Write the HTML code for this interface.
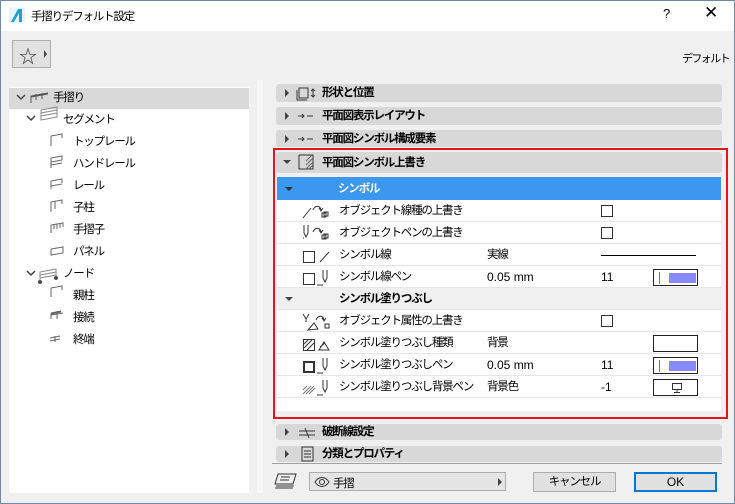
<!DOCTYPE html>
<html><head><meta charset="utf-8">
<style>
*{margin:0;padding:0;box-sizing:border-box}
body{width:735px;height:504px;overflow:hidden;font-family:"Liberation Sans","Noto Sans CJK JP",sans-serif;font-size:11.5px;letter-spacing:-1.2px;color:#000;background:#f0f0f0;position:relative;white-space:nowrap}
.a{position:absolute}
.l{letter-spacing:0;font-size:12px}
.win{left:0;top:0;width:735px;height:504px;border:1px solid #6f8aa5;background:#f0f0f0}
.title{left:1px;top:1px;width:733px;height:30px;background:#fff}
.bar{position:absolute;left:276px;width:446px;background:#d8d8d8;border-radius:3px;font-weight:bold;line-height:19px}
.bar .t{position:absolute;left:46px;top:0}
.tri{position:absolute;width:0;height:0;border-top:4px solid transparent;border-bottom:4px solid transparent;border-left:4px solid #444}
.trid{position:absolute;width:0;height:0;border-left:4px solid transparent;border-right:4px solid transparent;border-top:4px solid #444}
.tree div.r{position:absolute;height:22px;line-height:23px}
.row{position:absolute;left:277px;width:444px;height:22px;line-height:23px;border-bottom:1px solid #e6e6e6;background:#fff}
.row .n{position:absolute;left:62px}
.row .v{position:absolute;left:210px}
.row .k{position:absolute;left:324px;letter-spacing:0;font-size:12px}
.cb{position:absolute;left:324px;top:5px;width:12px;height:12px;border:1px solid #333;background:#fff}
.sw{position:absolute;left:376px;top:3px;width:45px;height:17px;border:1px solid #222;background:#fff}
.sw i{position:absolute;left:15px;top:3px;width:27px;height:10px;background:#8888ff}
.sw b{position:absolute;left:5px;top:2px;width:1px;height:12px;background:#6666ee}
</style></head><body>
<div class="a win"></div>
<div class="a title"></div>
<svg class="a" style="left:9px;top:7px" width="16" height="16"><rect width="16" height="16" fill="#e9f4fb"/><path d="M2 15 L9 2 L13 2 L13 15 L10 15 L10 6 L5 15Z" fill="#1fa0dc"/></svg>
<div class="a" style="left:31px;top:8px">手摺りデフォルト設定</div>
<div class="a l" style="left:663px;top:6px;font-size:13px">?</div>
<div class="a l" style="left:704px;top:3px;font-size:17px;font-weight:300">✕</div>
<div class="a" style="left:12px;top:40px;width:39px;height:28px;border:1px solid #adadad;background:#e1e1e1"></div>
<div class="a l" style="left:19px;top:43px;font-size:18px;color:#333">☆</div>
<div class="tri" style="left:44px;top:50px;border-left-width:3px"></div>
<div class="a" style="left:682px;top:50px;font-size:11px;letter-spacing:-1.6px">デフォルト</div>

<div class="a" style="left:9px;top:87px;width:240px;height:406px;background:#fff"></div>
<div class="a" style="left:257px;top:80px;width:6px;height:413px;background:#f7f7f7"></div>
<div class="a" style="left:9px;top:88px;width:240px;height:21px;background:#d9d9d9"></div>
<div class="tree">
<div class="r" style="left:53px;top:87px">手摺り</div>
<div class="r" style="left:63px;top:109px">セグメント</div>
<div class="r" style="left:73px;top:131px">トップレール</div>
<div class="r" style="left:73px;top:153px">ハンドレール</div>
<div class="r" style="left:73px;top:175px">レール</div>
<div class="r" style="left:73px;top:197px">子柱</div>
<div class="r" style="left:73px;top:219px">手摺子</div>
<div class="r" style="left:73px;top:241px">パネル</div>
<div class="r" style="left:63px;top:263px">ノード</div>
<div class="r" style="left:73px;top:285px">親柱</div>
<div class="r" style="left:73px;top:307px">接続</div>
<div class="r" style="left:73px;top:329px">終端</div>
</div>
<svg class="a" style="left:0;top:80px" width="250" height="280" fill="none" stroke="#555" stroke-width="1">
<path d="M17 15l4 4 4-4M27 36l4 4 4-4M27 191l4 4 4-4" stroke="#444" stroke-width="1.5"/>
<path d="M31 23v-7l17-3M36 14v6M42 13v6M31 17l17-3"/>
<path d="M41 40v-10l16-3v10zM41 33l16-3M41 36l16-3" stroke="#888"/>
<path d="M51 66v-10l11-2v4M51 88v-10l11-2v4M51 85l11-2M51 82l11-2M51 109v-8l11-2v4M51 106l11-2M51 132v-10l11-2v4M55 121v8M51 153v-8l12-2v4M54 144v5M57 144v5M60 143v5M51 175v-6l12-2v6zM51 217v-9l11-2v4M51 239v-4l12-2M51 237v-3l10-2M51 233l10-2M57 231v8M50 261l10-2M50 258l10-2M55 256v6" stroke="#666"/>
<path d="M40 202v-10l16-3v8M40 195l16-3M40 198l16-3" stroke="#888"/>
<circle cx="40" cy="202" r="1.5" fill="#333"/><circle cx="56" cy="198" r="1.5" fill="#333"/>
</svg>

<div class="bar" style="top:84px;height:18px"><div class="tri" style="left:9px;top:5px"></div><div class="t">形状と位置</div></div>
<div class="bar" style="top:107px;height:18px"><div class="tri" style="left:9px;top:5px"></div><div class="t">平面図表示レイアウト</div></div>
<div class="bar" style="top:130px;height:17px"><div class="tri" style="left:9px;top:5px"></div><div class="t">平面図シンボル構成要素</div></div>
<svg class="a" style="left:295px;top:86px" width="30" height="60" fill="none" stroke="#333"><rect x="4" y="2" width="9" height="10"/><path d="M2 4v10h10M18 3v8M16 5l2-2 2 2M16 9l2 2 2-2M3 30h6M7 28l2 2-2 2M12 30h6M3 53h6M7 51l2 2-2 2M12 53h6"/></svg>

<div class="a" style="left:273px;top:148px;width:455px;height:271px;border:2px solid #e8141a"></div>
<div class="bar" style="top:152px;height:21px;line-height:22px"><div class="trid" style="left:7px;top:8px"></div><div class="t">平面図シンボル上書き</div></div>
<svg class="a" style="left:296px;top:153px" width="20" height="18" fill="none" stroke="#333"><rect x="3" y="2" width="14" height="14"/><path d="M10 16l7-7M13 16l4-4M10 12l7-7M10 8l6-6" stroke="#666"/></svg>
<div class="a" style="left:277px;top:177px;width:444px;height:234px;background:#fff"></div>
<div class="a" style="left:277px;top:177px;width:444px;height:23px;background:#3c97f0;color:#fff;font-weight:bold;line-height:24px"><div class="trid" style="left:8px;top:10px;border-top-color:#234"></div><span style="position:absolute;left:61px">シンボル</span></div>
<div class="row" style="top:200px"><span class="n">オブジェクト線種の上書き</span><div class="cb"></div></div>
<div class="row" style="top:222px"><span class="n">オブジェクトペンの上書き</span><div class="cb"></div></div>
<div class="row" style="top:244px"><span class="n">シンボル線</span><span class="v">実線</span><div class="a" style="left:324px;top:11px;width:95px;height:1px;background:#000"></div></div>
<div class="row" style="top:266px"><span class="n">シンボル線ペン</span><span class="v l">0.05 mm</span><span class="k">11</span><div class="sw"><b></b><i></i></div></div>
<div class="row" style="top:288px;background:#f0f0f0;font-weight:bold"><div class="trid" style="left:8px;top:9px"></div><span class="n">シンボル塗りつぶし</span></div>
<div class="row" style="top:310px"><span class="n">オブジェクト属性の上書き</span><div class="cb"></div></div>
<div class="row" style="top:332px"><span class="n">シンボル塗りつぶし種類</span><span class="v">背景</span><div class="sw"></div></div>
<div class="row" style="top:354px"><span class="n">シンボル塗りつぶしペン</span><span class="v l">0.05 mm</span><span class="k">11</span><div class="sw"><b></b><i></i></div></div>
<div class="row" style="top:376px"><span class="n">シンボル塗りつぶし背景ペン</span><span class="v">背景色</span><span class="k">-1</span><div class="sw"><svg style="position:absolute;left:17px;top:2px" width="12" height="12" fill="none" stroke="#333"><rect x="1.5" y="1.5" width="9" height="6"/><path d="M6 8v2M3 10.5h6"/></svg></div></div>
<svg class="a" style="left:302px;top:200px" width="36" height="200" fill="none" stroke="#333">
<path d="M1 18l8-10M11 10c2-5 7-5 8 0M17 8l2 3 2-3" /><rect x="20" y="13" width="4" height="4"/><rect x="22" y="12" width="4" height="4"/>
<path d="M2 25v8l2 4 2-4v-8M2 38h-1M11 32c2-5 7-5 8 0M17 30l2 3 2-3"/><rect x="20" y="35" width="4" height="4"/><rect x="22" y="34" width="4" height="4"/>
<rect x="1.5" y="51.5" width="11" height="11"/><path d="M18 62l9-10"/>
<rect x="1.5" y="73.5" width="11" height="11"/><path d="M21 70v8l2 4 2-4v-8M15 85h6"/>
<path d="M1 114l3 5 3-5M4 119v3M6 130l6-7 4 6zM14 120c2-5 7-5 8 0M20 118l2 3 2-3"/><rect x="23" y="124" width="4" height="4"/>
<rect x="1.5" y="139.5" width="11" height="11"/><path d="M2 148l8-8M5 150l7-7M2 144l4-4" /><path d="M17 150l5-8 5 8zM18 147l5-4"/>
<rect x="2" y="162" width="10" height="10" stroke-width="2"/><path d="M21 158v8l2 4 2-4v-8M15 173h6"/>
<path d="M1 194l8-8M4 194l8-8M7 194l6-6M1 190l4-4" stroke="#777"/><path d="M21 180v8l2 4 2-4v-8M15 195h6"/>
</svg>

<div class="bar" style="top:424px;height:16px;line-height:17px"><div class="tri" style="left:9px;top:4px"></div><div class="t">破断線設定</div></div>
<div class="bar" style="top:446px;height:16px;line-height:17px"><div class="tri" style="left:9px;top:4px"></div><div class="t">分類とプロパティ</div></div>
<svg class="a" style="left:297px;top:425px" width="24" height="40" fill="none" stroke="#333"><path d="M2 6h16M2 10h16M8 3l4 10"/><rect x="5" y="22" width="11" height="14"/><path d="M7 26h7M7 29h7M7 32h7"/></svg>
<div class="a" style="left:272px;top:463px;width:450px;height:1px;background:#a0a0a0"></div>
<svg class="a" style="left:273px;top:472px" width="28" height="18" fill="none" stroke="#333"><path d="M5 2h18l-3 10H2zM3 14h18M2 16h18M8 5h9M7 8h9"/></svg>
<div class="a" style="left:309px;top:472px;width:197px;height:19px;border:1px solid #adadad;background:#e5e5e5"></div>
<svg class="a" style="left:314px;top:476px" width="16" height="12" fill="none" stroke="#333"><path d="M1 6c4-6 10-6 14 0c-4 6-10 6-14 0z"/><circle cx="8" cy="6" r="2.5"/></svg>
<div class="a" style="left:333px;top:475px">手摺</div>
<div class="tri" style="left:498px;top:478px"></div>
<div class="a" style="left:533px;top:472px;width:83px;height:20px;border:1px solid #adadad;background:#e1e1e1;text-align:center;line-height:19px">キャンセル</div>
<div class="a l" style="left:634px;top:472px;width:83px;height:20px;border:2px solid #0078d7;background:#e1e1e1;text-align:center;line-height:16px">OK</div>
</body></html>
